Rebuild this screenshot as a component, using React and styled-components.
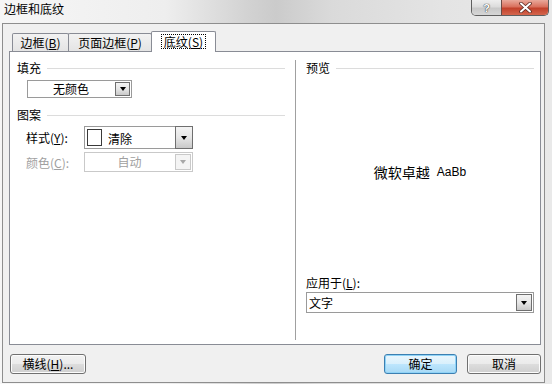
import styled, { createGlobalStyle } from "styled-components";

const GlobalStyle = createGlobalStyle`
  html, body { margin: 0; padding: 0; }
  body {
    width: 552px;
    height: 384px;
    overflow: hidden;
    font-family: "Noto Sans CJK SC", "Liberation Sans", sans-serif;
    font-size: 12px;
    color: #000;
  }
`;

const Window = styled.div`
  width: 552px;
  height: 384px;
  box-sizing: border-box;
  display: flex;
  flex-direction: column;
  background: linear-gradient(90deg, #f6f6f6 0%, #eeeeee 30%, #d2d2d2 45%, #cbcbcb 50%, #dadada 60%, #e4e4e4 80%, #e9e9e9 100%);
`;

const TitleBar = styled.div`
  height: 23px;
  flex: none;
  display: flex;
  justify-content: space-between;
  align-items: flex-start;
  padding: 0 3px 0 4px;
`;

const Title = styled.div`
  line-height: 18px;
  font-size: 12px;
`;

const Captions = styled.div`
  display: flex;
  height: 15px;
  border: 1px solid #5f5f5f;
  border-top: none;
  border-radius: 0 0 5px 5px;
  overflow: hidden;
`;

const CaptionButton = styled.div`
  width: ${(p) => p.$w}px;
  display: flex;
  align-items: center;
  justify-content: center;
  background: ${(p) =>
    p.$close
      ? "linear-gradient(#e9a99b 0%, #d9705d 45%, #c2412b 55%, #d4664e 100%)"
      : "linear-gradient(#eeeeee 0%, #dcdcdc 45%, #c8c8c8 55%, #d6d6d6 100%)"};
  border-left: ${(p) => (p.$close ? "1px solid #6b4a44" : "none")};
  color: #fff;
  font: bold 11px "Liberation Sans", sans-serif;
  text-shadow: 0 0 1px #333, 0 0 1px #333;
`;

const Client = styled.div`
  flex: 1;
  margin: 0 7px 1px 2px;
  border: 1px solid #8e8e8e;
  background: #f0f0f0;
  display: flex;
  flex-direction: column;
`;

const TabRow = styled.div`
  height: 27px;
  flex: none;
  display: flex;
  align-items: flex-end;
  padding-left: 9px;
`;

const Tab = styled.div`
  box-sizing: border-box;
  width: ${(p) => p.$w}px;
  height: ${(p) => (p.$active ? 21 : 18)}px;
  margin-left: -1px;
  margin-bottom: ${(p) => (p.$active ? -1 : 0)}px;
  position: relative;
  z-index: ${(p) => (p.$active ? 1 : 0)};
  border: 1px solid #898c95;
  border-bottom: none;
  border-radius: 2px 2px 0 0;
  background: ${(p) => (p.$active ? "#fff" : "linear-gradient(#f2f2f2, #e4e4e4)")};
  display: flex;
  align-items: ${(p) => (p.$active ? "flex-start" : "center")};
  padding-top: ${(p) => (p.$active ? 3 : 0)}px;
  justify-content: center;
  line-height: 13px;
  white-space: nowrap;
`;

const Focus = styled.span`
  outline: 1px dotted #000;
  padding: 0 2px;
  line-height: 13px;
`;

const Acc = styled.span`
  text-decoration: underline;
`;

const Panel = styled.div`
  box-sizing: border-box;
  height: 294px;
  flex: none;
  margin: 0 3px 0 6px;
  border: 1px solid #898c95;
  background: #fff;
  display: flex;
`;

const LeftCol = styled.div`
  box-sizing: border-box;
  width: 285px;
  flex: none;
  padding: 8px 10px 0 7px;
  display: flex;
  flex-direction: column;
`;

const Separator = styled.div`
  width: 1px;
  flex: none;
  margin: 8px 0 4px;
  background: #a0a0a0;
`;

const RightCol = styled.div`
  flex: 1;
  box-sizing: border-box;
  padding: 8px 6px 31px 10px;
  display: flex;
  flex-direction: column;
`;

const GroupHeader = styled.div`
  display: flex;
  align-items: center;
  gap: 6px;
  height: 16px;
  line-height: 16px;
  margin-top: ${(p) => p.$mt || 0}px;
  &::after {
    content: "";
    flex: 1;
    height: 1px;
    background: #dcdcdc;
  }
`;

const Combo = styled.div`
  box-sizing: border-box;
  display: flex;
  width: ${(p) => (p.$w ? `${p.$w}px` : "100%")};
  height: ${(p) => p.$h}px;
  margin-top: ${(p) => p.$mt || 0}px;
  margin-left: ${(p) => p.$ml || 0}px;
  border: 1px solid ${(p) => (p.$disabled ? "#c9c9c9" : "#9a9a9a")};
  background: #fff;
  color: ${(p) => (p.$disabled ? "#a0a0a0" : "#000")};
`;

const ComboValue = styled.div`
  flex: 1;
  display: flex;
  align-items: center;
  justify-content: ${(p) => (p.$left ? "flex-start" : "center")};
  gap: 6px;
  padding-left: ${(p) => p.$pl || 0}px;
  line-height: 14px;
`;

const Swatch = styled.span`
  width: 15px;
  height: 17px;
  box-sizing: border-box;
  border: 1px solid #3a3a3a;
  background: #fff;
`;

const ComboText = styled.span`
  padding-top: ${(p) => p.$pt || 0}px;
`;

const ArrowButton = styled.div`
  box-sizing: border-box;
  width: ${(p) => p.$w || 16}px;
  margin: ${(p) => (p.$inset ? "1px" : "-1px -1px -1px 0")};
  border: 1px solid ${(p) => (p.$disabled ? "#c9c9c9" : "#6f6f6f")};
  background: ${(p) =>
    p.$disabled ? "#f4f4f4" : "linear-gradient(#f4f4f4 0%, #e6e6e6 50%, #c9c9c9 100%)"};
  display: flex;
  align-items: center;
  justify-content: center;
  &::after {
    content: "";
    border-left: 3.5px solid transparent;
    border-right: 3.5px solid transparent;
    border-top: 4px solid ${(p) => (p.$disabled ? "#a8a8a8" : "#000")};
  }
`;

const FieldRow = styled.div`
  display: flex;
  align-items: center;
  margin-left: 9px;
  margin-top: 3px;
  color: ${(p) => (p.$disabled ? "#a0a0a0" : "#000")};
`;

const FieldLabel = styled.div`
  width: 58px;
  flex: none;
  white-space: nowrap;
`;

const Preview = styled.div`
  flex: 1;
  display: flex;
  align-items: center;
  justify-content: center;
  gap: 7px;
  padding-bottom: 8px;
`;

const PreviewCjk = styled.span`
  font-size: 14px;
`;

const PreviewLatin = styled.span`
  font: 12px "Liberation Sans", sans-serif;
`;

const ApplyLabel = styled.div`
  height: 16px;
  line-height: 16px;
`;

const ButtonRow = styled.div`
  height: 20px;
  flex: none;
  margin-top: 9px;
  padding: 0 3px 0 7px;
  display: flex;
  gap: 10px;
`;

const Button = styled.button`
  box-sizing: border-box;
  width: ${(p) => p.$w}px;
  height: 20px;
  padding: 0;
  margin: 0;
  margin-left: ${(p) => (p.$push ? "auto" : "0")};
  font: 12px "Noto Sans CJK SC", "Liberation Sans", sans-serif;
  line-height: 16px;
  color: #000;
  border: 1px solid ${(p) => (p.$primary ? "#3c7fb1" : "#707070")};
  border-radius: 3px;
  background: ${(p) =>
    p.$primary
      ? "linear-gradient(#eaf6fd 0%, #d9f0fc 49%, #bee6fd 50%, #a7d9f5 100%)"
      : "linear-gradient(#f2f2f2 0%, #ebebeb 49%, #dddddd 50%, #cfcfcf 100%)"};
  box-shadow: inset 0 0 0 1px ${(p) => (p.$primary ? "#8fd3f7" : "#fcfcfc")};
`;

export default function App() {
  return (
    <Window>
      <GlobalStyle />
      <TitleBar>
        <Title>边框和底纹</Title>
        <Captions>
          <CaptionButton $w={29}>?</CaptionButton>
          <CaptionButton $w={46} $close>
            <svg width="13" height="11" viewBox="0 0 13 11">
              <path d="M2 1.5 L11 9.5 M11 1.5 L2 9.5" stroke="#5a2a22" strokeWidth="3.6" strokeLinecap="round" />
              <path d="M2 1.5 L11 9.5 M11 1.5 L2 9.5" stroke="#fff" strokeWidth="2" strokeLinecap="round" />
            </svg>
          </CaptionButton>
        </Captions>
      </TitleBar>
      <Client>
        <TabRow>
          <Tab $w={57} style={{ marginLeft: 0 }}>
            边框(<Acc>B</Acc>)
          </Tab>
          <Tab $w={84}>
            页面边框(<Acc>P</Acc>)
          </Tab>
          <Tab $w={65} $active>
            <Focus>
              底纹(<Acc>S</Acc>)
            </Focus>
          </Tab>
        </TabRow>
        <Panel>
          <LeftCol>
            <GroupHeader>填充</GroupHeader>
            <Combo $w={105} $h={18} $mt={4} $ml={10}>
              <ComboValue>无颜色</ComboValue>
              <ArrowButton $w={15} $inset />
            </Combo>
            <GroupHeader $mt={9}>图案</GroupHeader>
            <FieldRow>
              <FieldLabel>
                样式(<Acc>Y</Acc>):
              </FieldLabel>
              <Combo $w={109} $h={23}>
                <ComboValue $left $pl={2}>
                  <Swatch />
                  <ComboText $pt={3}>清除</ComboText>
                </ComboValue>
                <ArrowButton $w={18} />
              </Combo>
            </FieldRow>
            <FieldRow $disabled>
              <FieldLabel>
                颜色(<Acc>C</Acc>):
              </FieldLabel>
              <Combo $w={109} $h={20} $disabled>
                <ComboValue>自动</ComboValue>
                <ArrowButton $w={16} $inset $disabled />
              </Combo>
            </FieldRow>
          </LeftCol>
          <Separator />
          <RightCol>
            <GroupHeader>预览</GroupHeader>
            <Preview>
              <PreviewCjk>微软卓越</PreviewCjk>
              <PreviewLatin>AaBb</PreviewLatin>
            </Preview>
            <ApplyLabel>
              应用于(<Acc>L</Acc>):
            </ApplyLabel>
            <Combo $h={21} $mt={1}>
              <ComboValue $left $pl={2}>
                文字
              </ComboValue>
              <ArrowButton $w={16} $inset />
            </Combo>
          </RightCol>
        </Panel>
        <ButtonRow>
          <Button $w={76}>
            横线(<Acc>H</Acc>)...
          </Button>
          <Button $w={73} $primary $push>
            确定
          </Button>
          <Button $w={74}>取消</Button>
        </ButtonRow>
      </Client>
    </Window>
  );
}
